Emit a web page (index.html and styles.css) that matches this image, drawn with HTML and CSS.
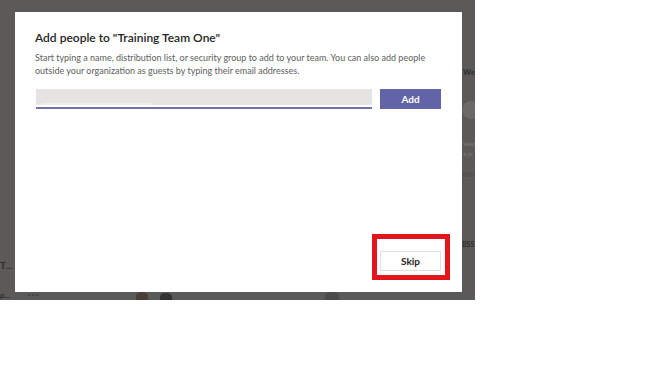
FILE: index.html
```html
<!DOCTYPE html>
<html lang="en">
<head>
<meta charset="utf-8">
<title>Add people</title>
<link rel="stylesheet" href="styles.css">
</head>
<body>
<div class="stage">
  <div class="bg bg-we">We</div>
  <div class="bg bg-avatar"></div>
  <div class="bg bg-wed">Wed</div>
  <div class="bg bg-ejo">e jo</div>
  <div class="bg bg-band"></div>
  <div class="bg bg-bss">BSS</div>
  <div class="bg bg-t">T...</div>
  <div class="bg bg-p">p...</div>
  <div class="bg bg-dots">&middot;&middot;&middot;</div>
  <div class="bg bg-blob1"></div>
  <div class="bg bg-blob2"></div>
  <div class="bg bg-blob3"></div>

  <div class="modal">
    <h1 class="title">Add people to "Training Team One"</h1>
    <p class="desc">Start typing a name, distribution list, or security group to add to your team. You can also add people outside your organization as guests by typing their email addresses.</p>
    <div class="entry">
      <div class="field">
        <div class="field-box"><span class="ghost"></span></div>
        <div class="field-line"></div>
      </div>
      <button class="btn btn-primary">Add</button>
    </div>
    <div class="footer">
      <div class="highlight">
        <button class="btn btn-secondary">Skip</button>
      </div>
    </div>
  </div>
</div>
</body>
</html>
```

FILE: styles.css
```css
html, body {
  margin: 0;
  padding: 0;
  background: #ffffff;
}

body {
  width: 666px;
  height: 383px;
  font-family: Lato, "Open Sans", sans-serif;
}

.stage {
  position: relative;
  width: 475px;
  height: 300px;
  background: #5b5a58;
  padding: 12px 0 0 15px;
  box-sizing: border-box;
  overflow: hidden;
}

.bg {
  position: absolute;
  color: #2e2d2c;
  font-size: 10px;
  font-weight: 700;
  line-height: 1;
  white-space: nowrap;
}

.bg-we { left: 463px; top: 68px; font-size: 8px; }
.bg-avatar { left: 462px; top: 101px; width: 18px; height: 18px; border-radius: 50%; background: #6b6a68; }
.bg-wed { left: 463px; top: 141px; font-weight: 400; font-size: 6px; color: #7d7b79; }
.bg-ejo { left: 463px; top: 151px; font-weight: 400; font-size: 6px; color: #7d7b79; }
.bg-band { left: 462px; top: 172px; width: 13px; height: 5px; background: #555452; }
.bg-bss { left: 462px; top: 241px; font-size: 7px; }
.bg-t { left: 0; top: 260px; font-size: 10px; }
.bg-p { left: 0; top: 291px; font-size: 8px; }
.bg-dots { left: 28px; top: 289px; font-size: 10px; color: #3a3938; letter-spacing: 1px; }
.bg-blob1 { left: 136px; top: 292px; width: 12px; height: 8px; border-radius: 50% 50% 0 0; background: #4a3e38; }
.bg-blob2 { left: 160px; top: 293px; width: 12px; height: 7px; border-radius: 50% 50% 0 0; background: #343332; }
.bg-blob3 { left: 325px; top: 292px; width: 14px; height: 8px; border-radius: 50% 50% 0 0; background: #4c4b4a; }

.modal {
  position: relative;
  width: 447px;
  height: 280px;
  background: #ffffff;
  box-sizing: border-box;
  padding: 17px 21px 21px 20px;
  display: flex;
  flex-direction: column;
}

.title {
  margin: 0;
  font-size: 12px;
  font-weight: 600;
  line-height: 18px;
  color: #252423;
}

.desc {
  margin: 4px 0 0;
  font-size: 9px;
  line-height: 13px;
  color: #605e5c;
  padding-right: 10px;
}

.entry {
  display: flex;
  align-items: flex-start;
  gap: 8px;
  margin-top: 12px;
  padding-left: 1px;
}

.field {
  flex: 1;
  display: flex;
  flex-direction: column;
}

.field-box {
  height: 16px;
  background: #e6e4e3;
  position: relative;
}

.ghost {
  position: absolute;
  left: 6px;
  right: 220px;
  bottom: 0;
  height: 2px;
  background: #efeeed;
}

.field-line {
  margin-top: 2px;
  height: 2px;
  background: #6e70b0;
}

.btn {
  font-family: inherit;
  font-size: 10px;
  font-weight: 700;
  width: 61px;
  height: 20px;
  padding: 0;
  box-sizing: border-box;
  cursor: pointer;
}

.btn-primary {
  background: #6264a7;
  color: #ffffff;
  border: none;
}

.btn-secondary {
  background: #ffffff;
  color: #252423;
  border: 1px solid #e1dfdd;
}

.footer {
  margin-top: auto;
  display: flex;
  justify-content: flex-end;
}

.highlight {
  border: 5px solid #e3151c;
  padding: 12px 4px 4px 3px;
  margin-right: -9px;
  margin-bottom: -9px;
  display: flex;
}
```
